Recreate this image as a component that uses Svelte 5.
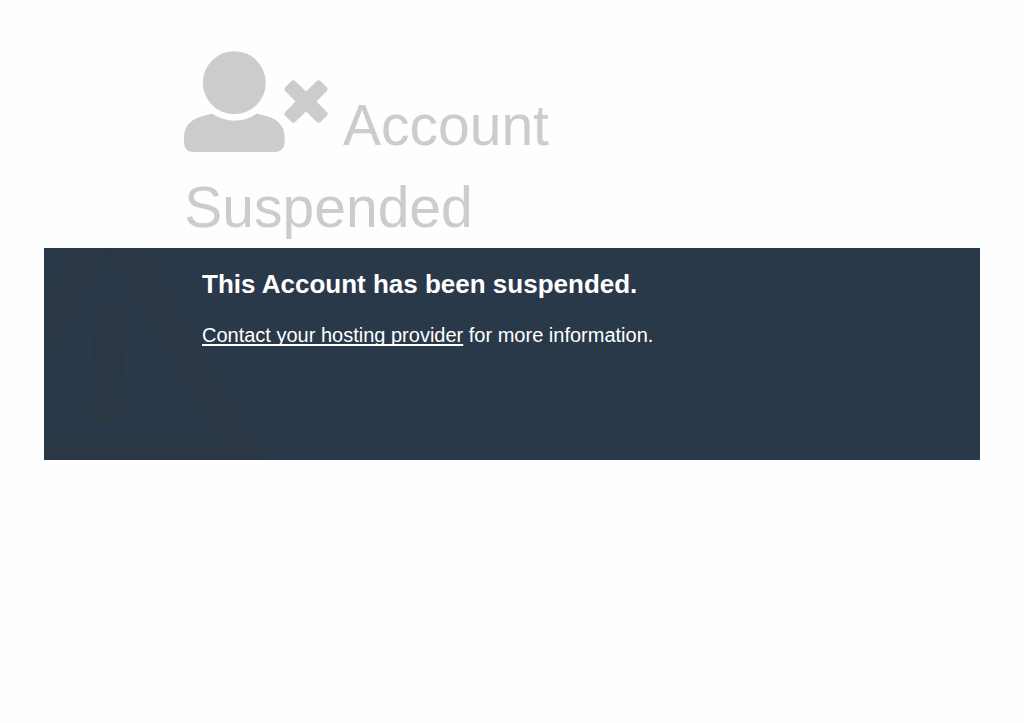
<script>
  const title = 'Account Suspended'
  const message = 'This Account has been suspended.'
</script>

<header>
  <h1>
    <svg class="user-icon" viewBox="0 0 144 101" aria-hidden="true">
      <circle cx="50.3" cy="31.7" r="31.5" />
      <path d="M28.2 62.6C41 72 60 72 72.6 62.6L82 65C93 67.5 100.6 74.5 100.6 86V91C100.6 97 97 101 91 101H9.5C3.5 101 0 97 0 91V86C0 74.5 8 67.5 19 65Z" />
      <path d="M107.2 30.2Q109.3 28.1 111.4 30.2L122 40.6L132.6 30.2Q134.7 28.1 136.8 30.2L142.6 36Q144.7 38.1 142.6 40.2L132.4 50.6L142.6 60.8Q144.7 62.9 142.6 65L136.8 70.8Q134.7 72.9 132.6 70.8L122 60.6L111.4 70.8Q109.3 72.9 107.2 70.8L101.4 65Q99.3 62.9 101.4 60.8L111.6 50.6L101.4 40.2Q99.3 38.1 101.4 36Z" />
    </svg>
    {title}
  </h1>
</header>

<main>
  <svg class="warning" viewBox="0 0 220 212" aria-hidden="true">
    <path fill-rule="evenodd" d="M29 0H100L219 212H-90V206L0 52ZM65 4L-49 195H178Z" />
    <path d="M47 52H82L77 132H52Z" />
    <circle cx="64.5" cy="157" r="18.5" />
  </svg>
  <div class="info">
    <h2>{message}</h2>
    <p><a href="#contact">Contact your hosting provider</a> for more information.</p>
  </div>
</main>

<style>
  :global(body) {
    margin: 0;
    background: #fefefe;
    font-family: Arial, "Liberation Sans", sans-serif;
  }

  header {
    padding: 51px 18% 0;
    color: #ccc;
  }

  h1 {
    margin: 0;
    font-size: 57px;
    font-weight: 400;
    line-height: 82px;
  }

  .user-icon {
    width: 144px;
    height: 101px;
    margin-right: 2px;
    vertical-align: -7px;
    fill: currentColor;
  }

  main {
    position: relative;
    min-height: 212px;
    margin: 0 44px;
    overflow: hidden;
    background: #2a394a;
    color: #fff;
  }

  .warning {
    position: absolute;
    top: 0;
    left: 0;
    width: 220px;
    height: 212px;
    fill: #2b3844;
    stroke: #293642;
    stroke-width: 1;
  }

  .info {
    position: relative;
    padding: 20px 24px 24px 158px;
  }

  h2 {
    margin: 0 0 20px;
    font-size: 26px;
    line-height: 32px;
  }

  p {
    margin: 0;
    font-size: 20px;
    line-height: 30px;
  }

  a {
    color: inherit;
    text-decoration: underline;
    text-decoration-thickness: 2px;
    text-decoration-skip-ink: none;
    text-underline-offset: 2px;
  }
</style>
